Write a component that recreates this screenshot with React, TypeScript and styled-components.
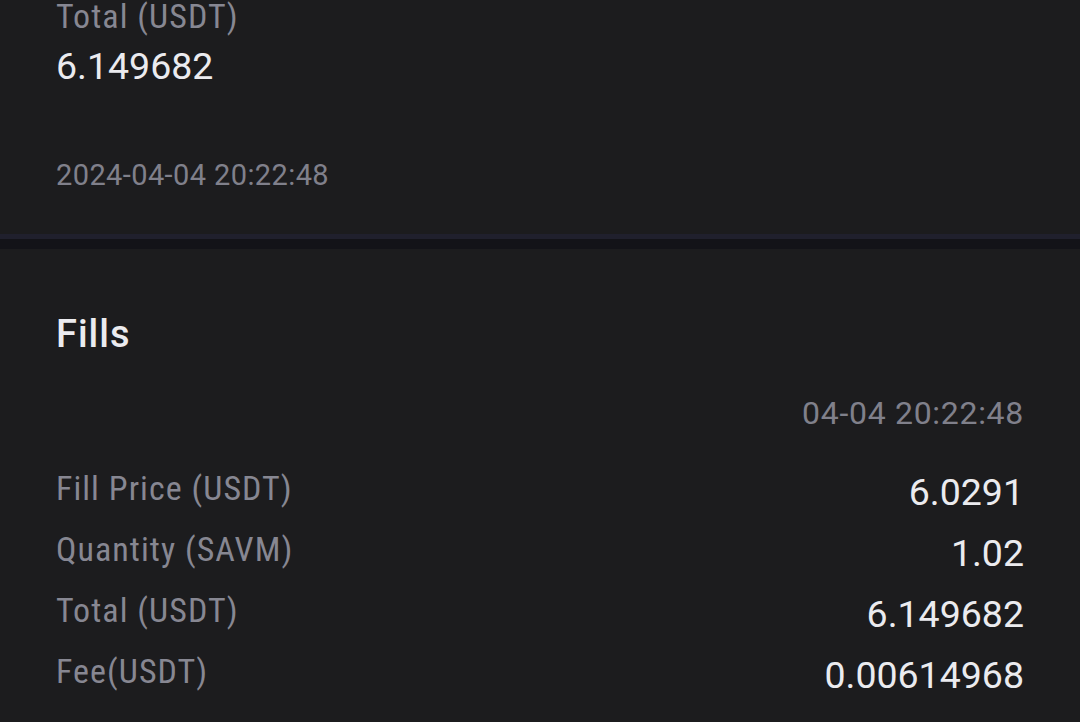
import React from "react";
import styled, { createGlobalStyle } from "styled-components";

const Global = createGlobalStyle`
  html, body { margin: 0; padding: 0; background: #1c1c1e; }
  body { font-family: "Roboto", "Noto Sans", sans-serif; }
`;

const Page = styled.div`
  width: 1080px;
  height: 722px;
  overflow: hidden;
  background: #1c1c1e;
  display: flex;
  flex-direction: column;
`;

const TopCard = styled.section`
  padding: 0 56px;
  height: 234px;
  display: flex;
  flex-direction: column;
`;

const Label = styled.div`
  font-family: "Roboto Condensed", "Roboto", sans-serif;
  color: #878792;
  font-size: 34px;
  line-height: 40px;
  letter-spacing: 1.05px;
  white-space: nowrap;
`;

const TopLabel = styled(Label)`
  margin-top: -4px;
`;

const Number = styled.div`
  font-family: "Roboto", sans-serif;
  color: #ebebef;
  font-size: 37.5px;
  line-height: 44px;
  white-space: nowrap;
`;

const BigValue = styled(Number)`
  margin-top: 8px;
`;

const DateText = styled.div`
  font-family: "Roboto", sans-serif;
  color: #80808b;
  font-size: 29px;
  line-height: 34px;
  letter-spacing: 0.4px;
  margin-top: 70px;
`;

const Divider = styled.div`
  height: 10px;
  background: #131318;
  border-top: 5px solid #20202d;
`;

const Fills = styled.section`
  padding: 0 56px;
  display: flex;
  flex-direction: column;
`;

const Title = styled.h2`
  margin: 63px 0 0;
  font-family: "Roboto", sans-serif;
  color: #ebebef;
  font-size: 38px;
  line-height: 44px;
  font-weight: 500;
  letter-spacing: 1px;
`;

const FillTime = styled.div`
  align-self: flex-end;
  font-family: "Roboto", sans-serif;
  color: #80808b;
  font-size: 32px;
  line-height: 38px;
  letter-spacing: 0.7px;
  margin-top: 38px;
`;

const Rows = styled.div`
  display: flex;
  flex-direction: column;
  gap: 21px;
  margin-top: 36px;
`;

const Row = styled.div`
  display: flex;
  justify-content: space-between;
  align-items: flex-start;
  height: 40px;
`;

const Value = styled(Number)`
  line-height: 40px;
  margin-top: 4px;
`;

const rows = [
  ["Fill Price (USDT)", "6.0291"],
  ["Quantity (SAVM)", "1.02"],
  ["Total (USDT)", "6.149682"],
  ["Fee(USDT)", "0.00614968"],
];

export default function App() {
  return (
    <Page>
      <Global />
      <TopCard>
        <TopLabel>Total (USDT)</TopLabel>
        <BigValue>6.149682</BigValue>
        <DateText>2024-04-04 20:22:48</DateText>
      </TopCard>
      <Divider />
      <Fills>
        <Title>Fills</Title>
        <FillTime>04-04 20:22:48</FillTime>
        <Rows>
          {rows.map(([l, v]) => (
            <Row key={l}>
              <Label>{l}</Label>
              <Value>{v}</Value>
            </Row>
          ))}
        </Rows>
      </Fills>
    </Page>
  );
}
